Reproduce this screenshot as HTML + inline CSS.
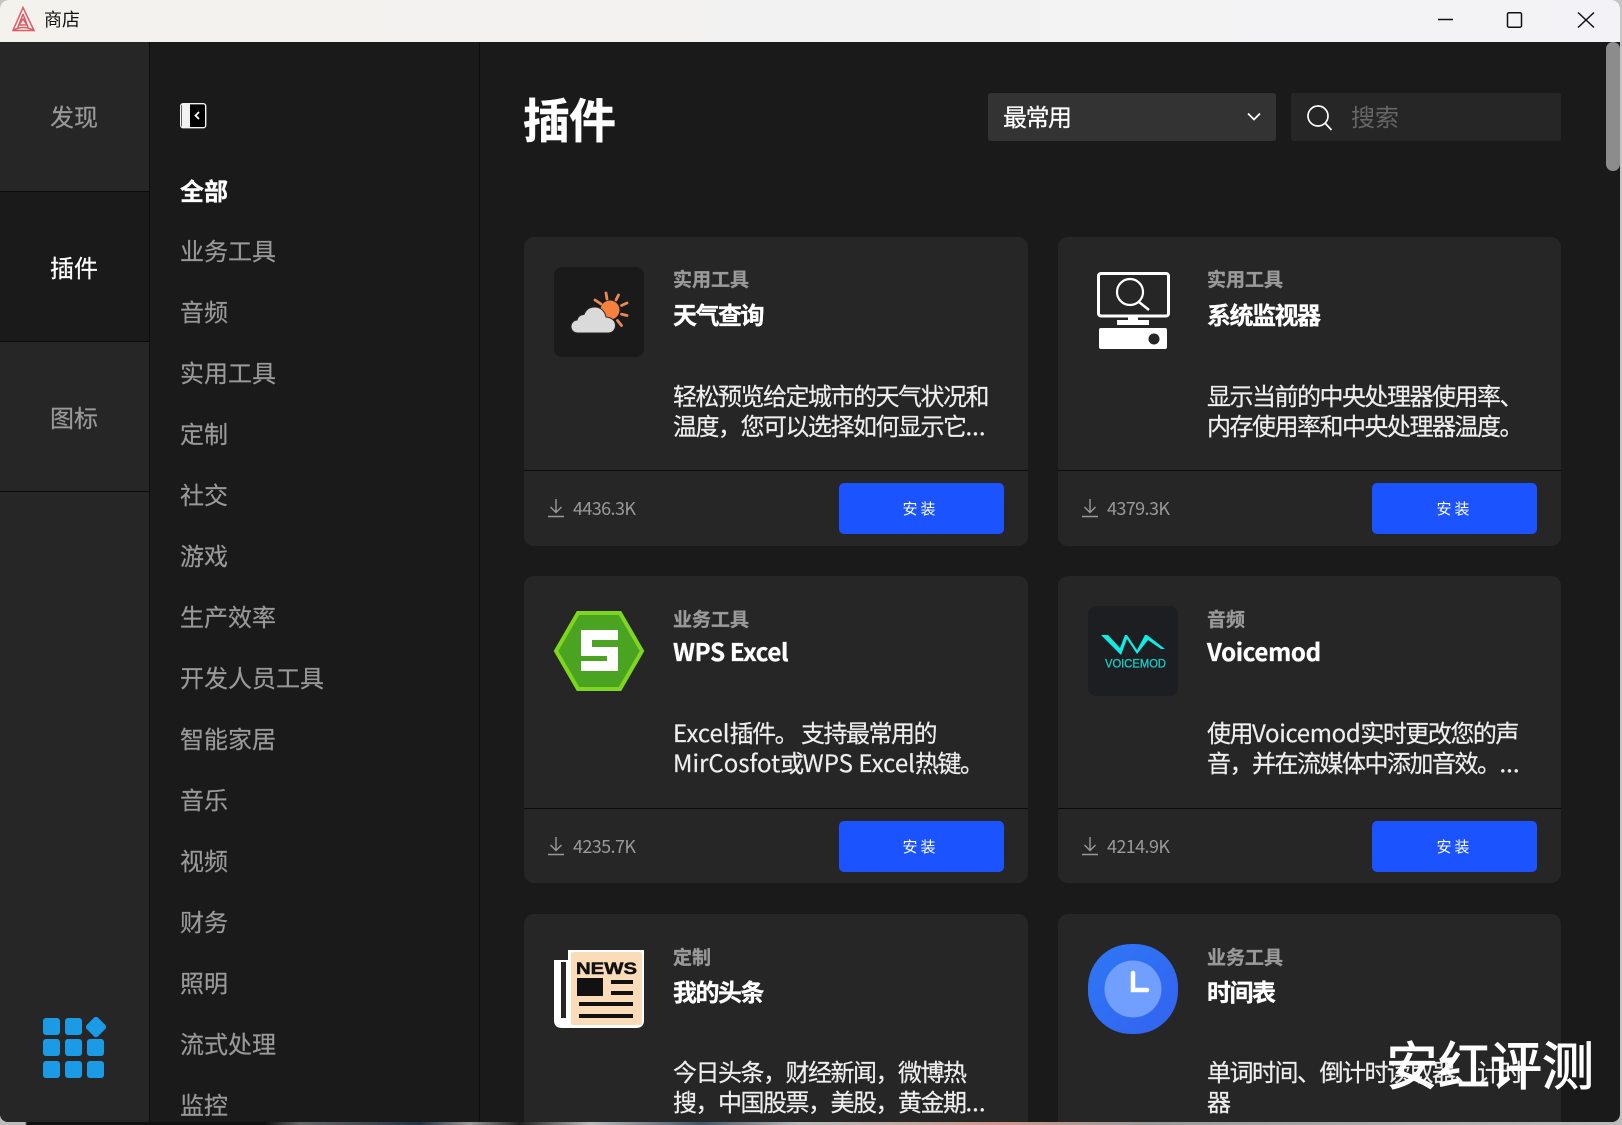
<!DOCTYPE html>
<html lang="zh"><head><meta charset="utf-8"><title>商店</title>
<style>
html,body{margin:0;padding:0;width:1622px;height:1125px;overflow:hidden;background:#c4c4c4}
*{box-sizing:border-box}
body{position:relative;font-family:"Noto Sans CJK SC","Liberation Sans",sans-serif}
#strip{position:absolute;left:0;right:0;top:1118px;height:7px;background:linear-gradient(90deg,#bbb 0,#bbb 25px,#111 27px,#111 265px,#666 300px,#234 420px,#999 470px,#222 520px,#bbb 590px,#456 700px,#bbb 800px,#c98 1000px,#999 1150px,#bbb 1622px)}
#win{position:absolute;left:0;top:0;width:1620px;height:1122px;background:#1a1a1a;border-radius:8px;overflow:hidden}
.t{position:absolute;white-space:nowrap;line-height:30px;height:30px}
.b{position:absolute}
#tb{position:absolute;left:0;top:0;width:1620px;height:42px;background:linear-gradient(90deg,#f3f2ed,#f3f3f7)}
.rail{color:#999;font-size:24px;left:50px;-webkit-text-stroke:.2px}
.sub{color:#999;font-size:24px;left:180px;-webkit-text-stroke:.2px}
.card{position:absolute;background:#262626;border-radius:10px;width:504px}
.cat{color:#999;font-size:19px;font-weight:700;-webkit-text-stroke:.3px}
.ttl{color:#fff;font-size:24px;font-weight:700;letter-spacing:-1.5px;-webkit-text-stroke:.3px}
.dsc{color:#eee;font-size:24px;letter-spacing:-1.5px;-webkit-text-stroke:.2px}
.dsc span{letter-spacing:0}
.num{color:#999;font-size:18px;letter-spacing:-.6px}
.btn{position:absolute;background:#1a53ff;border-radius:5px;width:165px;height:51px;color:#fff;font-size:15px;letter-spacing:3px;line-height:51px;text-align:center;text-indent:-2px}
.div{position:absolute;height:1px;background:#0c0c0c;width:504px}
svg{position:absolute;overflow:visible}
</style></head><body>
<div id="strip"></div>
<div id="win">
<div id="tb"></div>
<svg style="left:0;top:0" width="40" height="40" fill="none" stroke="#dc5c65" stroke-width="1.500"><path d="M23 7.500 13 30.500h21zM23 14 17.500 28.500M23 14l5.500 14.500M13 30.500q10-6 21 0M23 19l-4 6h8z"/></svg>
<div class="t" style="left:44px;top:4px;font-size:18px;color:#111">商店</div>
<svg style="left:0;top:0" width="1620" height="42" fill="none" stroke="#111" stroke-width="1.500"><path d="M1438 19.500h15"/><rect x="1507.500" y="12.700" width="14" height="14.500" rx="1.500"/><path d="M1578 12.500l16 15M1594 12.500l-16 15"/></svg>

<div class="b" style="left:0;top:42px;width:149px;height:1080px;background:#262626"></div>
<div class="b" style="left:0;top:192px;width:149px;height:149px;background:#1a1a1a"></div>
<div class="b" style="left:0;top:191px;width:149px;height:1px;background:#0c0c0c"></div>
<div class="b" style="left:0;top:341px;width:149px;height:1px;background:#0c0c0c"></div>
<div class="b" style="left:0;top:491px;width:149px;height:1px;background:#0c0c0c"></div>
<div class="b" style="left:149px;top:42px;width:1px;height:1080px;background:#0c0c0c"></div>
<div class="b" style="left:479px;top:42px;width:1px;height:1080px;background:#0c0c0c"></div>
<div class="t rail" style="top:101px">发现</div>
<div class="t rail" style="top:252px;color:#fff">插件</div>
<div class="t rail" style="top:402px">图标</div>
<svg style="left:0;top:1000px" width="149" height="100" fill="#1b9ae6">
<rect x="43" y="18" width="17" height="17" rx="3"/><rect x="65" y="18" width="17" height="17" rx="3"/>
<rect x="88" y="19" width="16" height="16" rx="3" transform="rotate(45 96 27)"/>
<rect x="43" y="39" width="17" height="17" rx="3"/><rect x="65" y="39" width="17" height="17" rx="3"/><rect x="87" y="39" width="17" height="17" rx="3"/>
<rect x="43" y="61" width="17" height="17" rx="3"/><rect x="65" y="61" width="17" height="17" rx="3"/><rect x="87" y="61" width="17" height="17" rx="3"/></svg>

<svg style="left:180px;top:103px" width="27" height="26"><rect x=".7" y=".7" width="25" height="24" rx="2.500" fill="#000" stroke="#f2f2f2" stroke-width="1.400"/><path d="M2 1h8v23H2z" fill="#f2f2f2"/><path d="M19 9l-3.500 3.500L19 16" fill="none" stroke="#fff" stroke-width="1.800"/></svg>
<div class="t sub" style="top:175px;color:#fff;font-weight:700;-webkit-text-stroke:.3px">全部</div>
<div class="t sub" style="top:235px">业务工具</div>
<div class="t sub" style="top:296px">音频</div>
<div class="t sub" style="top:357px">实用工具</div>
<div class="t sub" style="top:418px">定制</div>
<div class="t sub" style="top:479px">社交</div>
<div class="t sub" style="top:540px">游戏</div>
<div class="t sub" style="top:601px">生产效率</div>
<div class="t sub" style="top:662px">开发人员工具</div>
<div class="t sub" style="top:723px">智能家居</div>
<div class="t sub" style="top:784px">音乐</div>
<div class="t sub" style="top:845px">视频</div>
<div class="t sub" style="top:906px">财务</div>
<div class="t sub" style="top:967px">照明</div>
<div class="t sub" style="top:1028px">流式处理</div>
<div class="t sub" style="top:1089px">监控</div>

<div class="t" style="left:523px;top:98px;height:40px;line-height:40px;font-size:47px;font-weight:700;color:#fff;letter-spacing:-1px;-webkit-text-stroke:.4px">插件</div>
<div class="b" style="left:988px;top:93px;width:288px;height:48px;background:#333;border-radius:3px"></div>
<div class="t" style="left:1003px;top:101px;font-size:24px;letter-spacing:-1.500px;color:#fff;-webkit-text-stroke:.2px">最常用</div>
<svg style="left:1247px;top:112px" width="14" height="10" fill="none" stroke="#fff" stroke-width="1.800"><path d="M1 1.500l6 6 6-6"/></svg>
<div class="b" style="left:1291px;top:93px;width:270px;height:48px;background:#262626;border-radius:3px"></div>
<svg style="left:1307px;top:105px" width="26" height="26" fill="none" stroke="#fff" stroke-width="1.700"><circle cx="11" cy="11" r="10"/><path d="M18 18l6.500 7"/></svg>
<div class="t" style="left:1351px;top:101px;font-size:24px;color:#666">搜索</div>

<div class="card" style="left:524px;top:237px;height:309px"></div>
<div class="div" style="left:524px;top:470px"></div>
<div class="b" style="left:554px;top:267px;width:90px;height:90px;border-radius:8px;background:#1a1a1a"></div>
<svg style="left:0;top:0" width="700" height="400"><circle cx="610" cy="310" r="9.500" fill="#f5813f"/><path d="M606 293l1 6M618.500 295l-2.500 5M627 303l-5.500 2.500M627 315.500l-5.500-1.300M621.500 325.500l-4-5M595 300l6 4" stroke="#ec8a55" stroke-width="2.800" stroke-linecap="round"/><path d="M578 333a6.500 6.500 0 0 1-1-13 7 7 0 0 1 7-5.500c2-5 6-7.500 10.500-7.500 6 0 10.500 4 11.500 10 6 .5 9.500 4 9.500 8.500S612 333 608 333z" fill="#dadada" stroke="#262626" stroke-width="1"/></svg>
<div class="t cat" style="left:673px;top:264px">实用工具</div>
<div class="t ttl" style="left:673px;top:299px">天气查询</div>
<div class="t dsc" style="left:673px;top:380px">轻松预览给定城市的天气状况和</div>
<div class="t dsc" style="left:673px;top:410px">温度，您可以选择如何显示它<span>...</span></div>
<svg style="left:548px;top:499px" width="18" height="19" fill="none" stroke="#999" stroke-width="1.400"><path d="M8 0v13M2.500 8L8 13.500 13.500 8M0 17.500h16"/></svg>
<div class="t num" style="left:573px;top:493px">4436.3K</div>
<div class="btn" style="left:839px;top:483px">安装</div>

<div class="card" style="left:1058px;top:237px;height:309px;width:503px"></div>
<div class="div" style="left:1058px;top:470px;width:503px"></div>
<svg style="left:0;top:0" width="1300" height="400" fill="none" stroke="#fff"><rect x="1098.500" y="273.500" width="70" height="42.500" rx="2.500" stroke-width="3"/><circle cx="1130" cy="292" r="13" stroke-width="2.200"/><path d="M1139 302l10 8" stroke-width="2.500"/><path d="M1128 317h10v3h-10zM1117 320h32v5h-32z" fill="#fff" stroke="none"/><rect x="1099" y="328" width="68" height="21" rx="2" fill="#fff" stroke="none"/><circle cx="1154" cy="339" r="5.500" fill="#262626" stroke="none"/></svg>
<div class="t cat" style="left:1207px;top:264px">实用工具</div>
<div class="t ttl" style="left:1207px;top:299px">系统监视器</div>
<div class="t dsc" style="left:1207px;top:380px">显示当前的中央处理器使用率、</div>
<div class="t dsc" style="left:1207px;top:410px">内存使用率和中央处理器温度。</div>
<svg style="left:1082px;top:499px" width="18" height="19" fill="none" stroke="#999" stroke-width="1.400"><path d="M8 0v13M2.500 8L8 13.500 13.500 8M0 17.500h16"/></svg>
<div class="t num" style="left:1107px;top:493px">4379.3K</div>
<div class="btn" style="left:1372px;top:483px;text-indent:0">安装</div>

<div class="card" style="left:524px;top:576px;height:307px"></div>
<div class="div" style="left:524px;top:808px"></div>
<svg style="left:554px;top:611px" width="90" height="80"><path d="M2 40 24 2h42L88 40 66 78H24z" fill="#4ba322" stroke="#7fd61e" stroke-width="4"/><path d="M27 19h37v10H38v7h26v24H27V50h26v-5H27z" fill="#fff"/></svg>
<div class="t cat" style="left:673px;top:604px">业务工具</div>
<div class="t ttl" style="left:673px;top:636px;letter-spacing:-.3px">WPS Excel</div>
<div class="t dsc" style="left:673px;top:717px"><span>Excel</span>插件。 支持最常用的</div>
<div class="t dsc" style="left:673px;top:747px"><span>MirCosfot</span>或<span>WPS Excel</span>热键。</div>
<svg style="left:548px;top:837px" width="18" height="19" fill="none" stroke="#999" stroke-width="1.400"><path d="M8 0v13M2.500 8L8 13.500 13.500 8M0 17.500h16"/></svg>
<div class="t num" style="left:573px;top:831px">4235.7K</div>
<div class="btn" style="left:839px;top:821px">安装</div>

<div class="card" style="left:1058px;top:576px;height:307px;width:503px"></div>
<div class="div" style="left:1058px;top:808px;width:503px"></div>
<div class="b" style="left:1088px;top:606px;width:90px;height:90px;border-radius:8px;background:#1c1e22"></div>
<svg style="left:0;top:0" width="1300" height="700"><path d="M1101 635h7l12 13 5-13h2l10 15 8-15h2l18 14h-4l-13-9-11 14-10-15-6 16z" fill="#10ece4"/><text x="1105" y="667.500" font-family="Liberation Sans, sans-serif" font-size="12" fill="#1ccac4" stroke="#1ccac4" stroke-width=".3" textLength="61" lengthAdjust="spacingAndGlyphs">VOICEMOD</text></svg>
<div class="t cat" style="left:1207px;top:604px">音频</div>
<div class="t ttl" style="left:1207px;top:636px;letter-spacing:-.3px">Voicemod</div>
<div class="t dsc" style="left:1207px;top:717px">使用<span style="letter-spacing:-.35px">Voicemod</span>实时更改您的声</div>
<div class="t dsc" style="left:1207px;top:747px">音，并在流媒体中添加音效。<span>...</span></div>
<svg style="left:1082px;top:837px" width="18" height="19" fill="none" stroke="#999" stroke-width="1.400"><path d="M8 0v13M2.500 8L8 13.500 13.500 8M0 17.500h16"/></svg>
<div class="t num" style="left:1107px;top:831px">4214.9K</div>
<div class="btn" style="left:1372px;top:821px;text-indent:0">安装</div>

<div class="card" style="left:524px;top:914px;height:220px"></div>
<svg style="left:0;top:0" width="700" height="1100"><path d="M568 950h76v70q0 8-8 8h-74q-8 0-8-8v-60h14z" fill="#fff"/><rect x="571" y="952" width="71" height="73" rx="2" fill="#fbdcb8"/><rect x="561" y="962" width="5" height="56" fill="#262626"/><rect x="577" y="978" width="26" height="18" fill="#111"/><path d="M611 982h22M611 993h22M579 1004h54M579 1016h54" stroke="#111" stroke-width="4"/><text x="576" y="974" font-family="Liberation Sans, sans-serif" font-weight="700" font-size="17" fill="#111" stroke="#111" stroke-width=".5" textLength="61" lengthAdjust="spacingAndGlyphs">NEWS</text></svg>
<div class="t cat" style="left:673px;top:942px">定制</div>
<div class="t ttl" style="left:673px;top:976px">我的头条</div>
<div class="t dsc" style="left:673px;top:1056px">今日头条，财经新闻，微博热</div>
<div class="t dsc" style="left:673px;top:1086px">搜，中国股票，美股，黄金期<span>...</span></div>

<div class="card" style="left:1058px;top:914px;height:220px;width:503px"></div>
<svg style="left:0;top:0" width="1300" height="1100"><defs><linearGradient id="g" x1="0" y1="0" x2="1" y2="1"><stop offset="0" stop-color="#2d78f5"/><stop offset="1" stop-color="#3462f0"/></linearGradient></defs><rect x="1088" y="944" width="90" height="90" rx="43" fill="url(#g)"/><circle cx="1133" cy="989" r="28.500" fill="#719fff"/><path d="M1133 973v17h14" fill="none" stroke="#fff" stroke-width="4.500" stroke-linecap="round"/></svg>
<div class="t cat" style="left:1207px;top:942px">业务工具</div>
<div class="t ttl" style="left:1207px;top:976px">时间表</div>
<div class="t dsc" style="left:1207px;top:1056px">单词时间、倒计时读取器、计时</div>
<div class="t dsc" style="left:1207px;top:1086px">器</div>

<div class="b" style="left:1606px;top:42px;width:14px;height:129px;background:#8c8c8c;border-radius:7px"></div>
<div class="t" style="left:1386px;top:1033px;height:60px;line-height:60px;font-size:52px;color:#fff;-webkit-text-stroke:1px #fff">安红评测</div>
</div>
</body></html>
